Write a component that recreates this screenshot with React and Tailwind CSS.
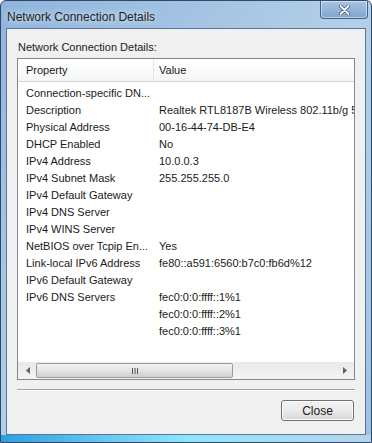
const rows = [
  ["Connection-specific DN...", ""],
  ["Description", "Realtek RTL8187B Wireless 802.11b/g 54Mbps USB 2.0 Network Adapter"],
  ["Physical Address", "00-16-44-74-DB-E4"],
  ["DHCP Enabled", "No"],
  ["IPv4 Address", "10.0.0.3"],
  ["IPv4 Subnet Mask", "255.255.255.0"],
  ["IPv4 Default Gateway", ""],
  ["IPv4 DNS Server", ""],
  ["IPv4 WINS Server", ""],
  ["NetBIOS over Tcpip En...", "Yes"],
  ["Link-local IPv6 Address", "fe80::a591:6560:b7c0:fb6d%12"],
  ["IPv6 Default Gateway", ""],
  ["IPv6 DNS Servers", "fec0:0:0:ffff::1%1"],
  ["", "fec0:0:0:ffff::2%1"],
  ["", "fec0:0:0:ffff::3%1"],
];

export default function App() {
  return (
    <div
      className="relative flex h-[443px] w-[372px] flex-col overflow-hidden rounded-t-[6px] border border-[#2d4a6a] bg-gradient-to-br from-[#8fb5dc] via-[#b4cfe8] to-[#9cc2e2] text-[11px] text-black"
      style={{ fontFamily: '"Liberation Sans", Arial, sans-serif' }}
    >
      {/* title bar */}
      <div className="flex h-[27px] shrink-0 items-start justify-between">
        <span className="ml-[6px] mt-[7px] text-[12px] text-[#1e1e1e] [text-shadow:0_0_6px_#ffffff]">
          Network Connection Details
        </span>
        <div className="mr-[3px] flex h-[18px] w-[48px] items-center justify-center rounded-b-[4px] border border-t-0 border-[#3f5f86] bg-gradient-to-b from-[#a9c4e2] to-[#7fa3cc] shadow-[inset_0_0_0_1px_rgba(255,255,255,0.5)]">
          <svg width="11" height="10" viewBox="0 0 11 10">
            <path d="M1.5 1 L9.5 9 M9.5 1 L1.5 9" stroke="#3a4d66" strokeWidth="3.2" strokeLinecap="round" />
            <path d="M1.5 1 L9.5 9 M9.5 1 L1.5 9" stroke="#ffffff" strokeWidth="1.8" strokeLinecap="round" />
          </svg>
        </div>
      </div>

      {/* client area */}
      <div className="mx-[5px] flex h-[407px] flex-col border border-[#5a7597] bg-[#f0f0f0] px-[10px] pt-[11px]">
        <div className="h-[18px] pl-[1px] leading-[14px] text-[#1a1a1a]">Network Connection Details:</div>

        <div className="flex h-[322px] flex-col border border-[#828790] bg-white">
          <div className="flex h-[23px] shrink-0 border-b border-[#d5d5d5] bg-gradient-to-b from-white to-[#f5f6f7]">
            <div className="flex w-[136px] items-center border-r border-[#e3e4e6] pl-[8px] text-[#1a1a1a]">Property</div>
            <div className="flex items-center pl-[5px] text-[#1a1a1a]">Value</div>
          </div>
          <div className="flex flex-1 flex-col overflow-hidden pt-[3px]">
            {rows.map(([p, v], i) => (
              <div key={i} className="flex h-[17px] shrink-0 items-center whitespace-nowrap text-[#1a1a1a]">
                <div className="w-[136px] shrink-0 overflow-hidden pl-[8px]">{p}</div>
                <div className="pl-[5px]">{v}</div>
              </div>
            ))}
          </div>
          {/* horizontal scrollbar */}
          <div className="flex h-[17px] shrink-0 items-center bg-gradient-to-b from-[#e8e8e8] to-[#f4f4f4] px-[1px]">
            <div className="flex h-[15px] w-[17px] items-center justify-center">
              <svg width="4" height="7" viewBox="0 0 4 7">
                <path d="M4 0 L0 3.5 L4 7 Z" fill="#606060" />
              </svg>
            </div>
            <div className="flex h-[15px] w-[197px] items-center justify-center rounded-[2px] border border-[#9c9c9c] bg-gradient-to-b from-[#f3f3f3] via-[#e4e4e4] to-[#cfcfcf]">
              <svg width="8" height="6" viewBox="0 0 8 6">
                <path d="M1.5 0 V6 M4 0 V6 M6.5 0 V6" stroke="#555" strokeWidth="1" />
              </svg>
            </div>
            <div className="flex-1" />
            <div className="flex h-[15px] w-[17px] items-center justify-center">
              <svg width="4" height="7" viewBox="0 0 4 7">
                <path d="M0 0 L4 3.5 L0 7 Z" fill="#606060" />
              </svg>
            </div>
          </div>
        </div>

        <div className="mt-[9px] h-[2px] border-t border-[#a0a0a0] border-b-white" style={{ borderBottomWidth: 1 }} />

        <div className="mt-[9px] flex justify-end pr-[1px]">
          <div className="flex h-[21px] w-[73px] items-center justify-center rounded-[3px] border border-[#707070] bg-gradient-to-b from-[#f2f2f2] via-[#ebebeb] to-[#d6d6d6] text-[12px] text-[#1a1a1a] shadow-[inset_0_0_0_1px_#fcfcfc]">
            Close
          </div>
        </div>
      </div>
      <div className="h-[7px] bg-gradient-to-r from-[#2b9fe0] via-[#8ee6fa] to-[#b6d3ea]" />
    </div>
  );
}
